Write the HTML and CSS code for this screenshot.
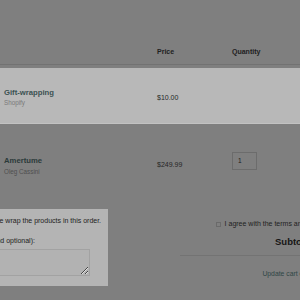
FILE: index.html
```html
<!DOCTYPE html>
<html lang="en">

<head>
    <meta charset="UTF-8">
    <meta name="viewport" content="width=device-width, initial-scale=1.0">
    <title>Cart</title>
    <link rel="stylesheet" href="styles.css">
</head>

<body>
    <div class="cart-head">
        <div class="cell name"></div>
        <div class="cell">Price</div>
        <div class="cell">Quantity</div>
    </div>

    <!-- gift wrap row is the highlighted one -->
    <div class="cart-row highlight">
        <div class="cell name">
            <a class="title" href="#">Gift-wrapping</a>
            <p class="vendor">Shopify</p>
        </div>
        <div class="cell price">$10.00</div>
        <div class="cell"></div>
    </div>

    <div class="cart-row second">
        <div class="cell name">
            <a class="title" href="#">Amertume</a>
            <p class="vendor">Oleg Cassini</p>
        </div>
        <div class="cell price">$249.99</div>
        <div class="cell qty">
            <input class="qty-input" type="text" value="1">
        </div>
    </div>

    <div class="cart-bottom">
        <div class="gift-box">
            <label class="gift-check"><input type="checkbox"> Please wrap the products in this order.</label>
            <label class="gift-label">Gift message (free and optional):</label>
            <textarea class="gift-note"></textarea>
        </div>

        <div class="totals">
            <label class="agree"><input class="tick" type="checkbox">I agree with the terms and conditions</label>
            <h3 class="subtotal">Subtotal $259.99</h3>
            <p class="update"><a href="#">Update cart</a> or <a class="checkout" href="#">Check out</a></p>
        </div>
    </div>
</body>

</html>
```

FILE: styles.css
```css
html, body {
    overflow: hidden;
}

body {
    margin: 0;
    width: 300px;
    height: 300px;
    background-color: #7f7f7f;
    font-family: "Liberation Sans", Arial, sans-serif;
    color: #1e1e1e;
}

/* Table header */
.cart-head {
    display: grid;
    grid-template-columns: 157px 75px 1fr;
    box-sizing: border-box;
    height: 65px;
    padding-top: 47px;
    border-bottom: 1px solid #727272;
    font-size: 7px;
    font-weight: bold;
    line-height: 10px;
}

.cell.name {
    padding-left: 4px;
}

/* Product rows */
.cart-row {
    display: grid;
    grid-template-columns: 157px 75px 1fr;
}

.cart-row.highlight {
    margin-top: 3px;
    height: 56px;
    box-sizing: border-box;
    padding: 20px 0 16px;
    align-items: center;
    background-color: #b8b8b8;
    border-bottom: 1px solid #c2c2c2;
}

.cart-row.second {
    height: 75px;
    box-sizing: border-box;
    align-items: start;
}

.second .name {
    padding-top: 32px;
}

.second .price {
    padding-top: 36px;
}

.second .qty {
    padding-top: 28px;
}

.title {
    display: block;
    font-size: 7.7px;
    font-weight: bold;
    line-height: 10px;
    color: #3b5252;
    text-decoration: none;
}

.second .title {
    color: #2b3a3a;
}

.vendor {
    margin: 0;
    font-size: 6.3px;
    line-height: 10px;
    color: #7a7a7a;
}

.second .vendor {
    line-height: 12px;
    color: #4f4f4f;
}

.price {
    font-size: 7px;
    line-height: 10px;
    color: #262626;
}

.qty-input {
    display: block;
    box-sizing: border-box;
    width: 25px;
    height: 18px;
    margin: 0;
    padding: 0 0 2px 5px;
    border: 1px solid #6c6c6c;
    background-color: #7f7f7f;
    font-family: "Liberation Sans", Arial, sans-serif;
    font-size: 6.5px;
    color: #1a1a1a;
}

/* Bottom: gift wrap note and totals */
.cart-bottom {
    display: flex;
    gap: 72px;
    margin-top: 10px;
}

.gift-box {
    flex-shrink: 0;
    box-sizing: border-box;
    width: 183px;
    margin-left: -75px;
    padding: 7px 8px 10px;
    background-color: #b4b4b4;
    font-size: 7px;
    line-height: 10px;
    color: #222;
}

.gift-check {
    display: block;
    padding-left: 49px;
    white-space: nowrap;
}

.gift-check input {
    display: none;
}

.gift-label {
    display: block;
    margin-top: 10px;
    white-space: nowrap;
}

.gift-note {
    display: block;
    box-sizing: border-box;
    width: 157px;
    height: 27px;
    margin-top: 3px;
    border: 1px solid #a2a2a2;
    background-color: #b2b2b2;
}

.totals {
    flex-shrink: 0;
    width: 170px;
    padding-top: 10px;
    text-align: right;
}

.agree {
    display: flex;
    align-items: center;
    justify-content: flex-end;
    margin-right: 11px;
    font-size: 7px;
    line-height: 10px;
    color: #222;
    white-space: nowrap;
}

.tick {
    appearance: none;
    width: 5px;
    height: 5px;
    margin: 0 4px 0 0;
    border: 1px solid #6a6a6a;
    background-color: #7f7f7f;
}

.subtotal {
    margin: 7px 0 0;
    padding-bottom: 7px;
    border-bottom: 1px solid #737373;
    font-size: 9.5px;
    line-height: 12px;
    color: #151515;
}

.update {
    margin: 13px 0 0;
    font-size: 6.8px;
    line-height: 10px;
    color: #333;
    white-space: nowrap;
}

.update a {
    color: #2f4646;
    text-decoration: none;
}

.checkout {
    display: inline-block;
    padding: 0 6px;
}
```
